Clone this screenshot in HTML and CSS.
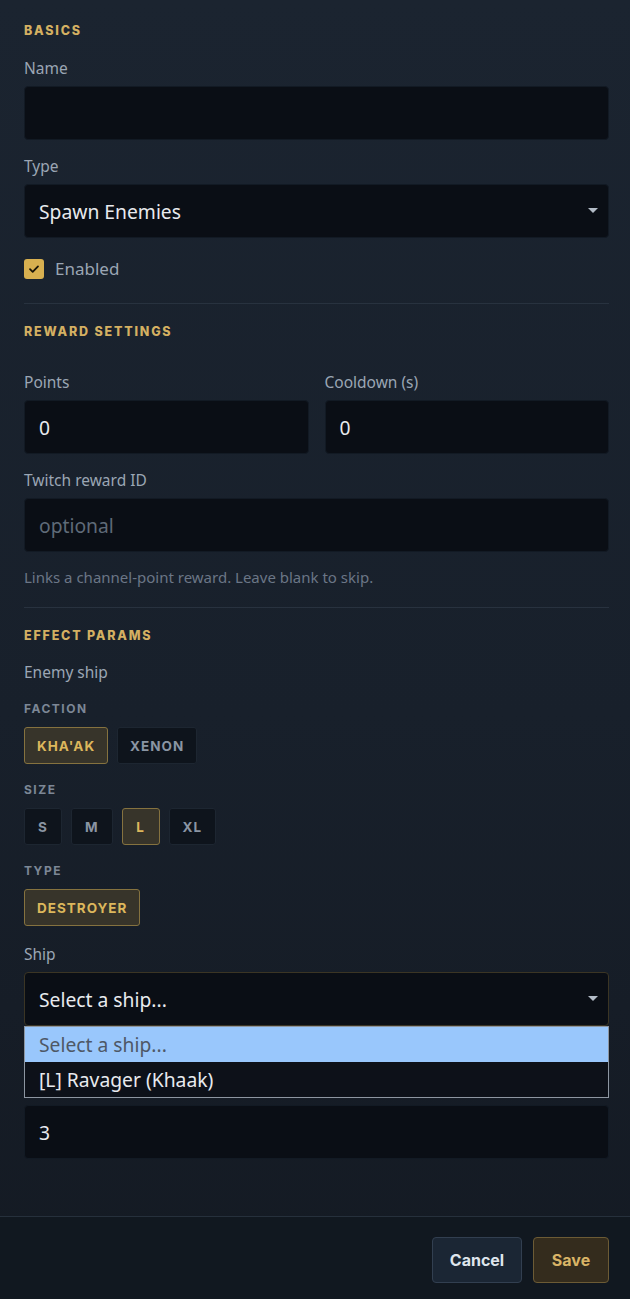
FILE: index.html
```html
<!DOCTYPE html>
<html>
<head>
<meta charset="utf-8">
<link rel="stylesheet" href="styles.css">
</head>
<body>
<div class="modal">
  <div class="content">
    <h3 class="section-title first">BASICS</h3>
    <div class="field">
      <label class="label">Name</label>
      <div class="input"></div>
    </div>
    <div class="field">
      <label class="label">Type</label>
      <div class="input select"><span class="value">Spawn Enemies</span><span class="caret"></span></div>
    </div>
    <div class="check-row">
      <span class="checkbox"><svg width="14" height="14" viewBox="0 0 14 14"><path d="M3 7.2l2.7 2.6L11 4.4" fill="none" stroke="#1a1408" stroke-width="1.8" stroke-linecap="round" stroke-linejoin="round"/></svg></span>
      <span class="check-label">Enabled</span>
    </div>
    <div class="divider"></div>

    <h3 class="section-title">REWARD SETTINGS</h3>
    <div class="row2">
      <div class="field">
        <label class="label">Points</label>
        <div class="input"><span class="value">0</span></div>
      </div>
      <div class="field">
        <label class="label">Cooldown (s)</label>
        <div class="input"><span class="value">0</span></div>
      </div>
    </div>
    <div class="field tight">
      <label class="label">Twitch reward ID</label>
      <div class="input"><span class="placeholder">optional</span></div>
    </div>
    <p class="hint">Links a channel-point reward. Leave blank to skip.</p>
    <div class="divider"></div>

    <h3 class="section-title">EFFECT PARAMS</h3>
    <div class="label sub">Enemy ship</div>
    <div class="mini-title">FACTION</div>
    <div class="chips">
      <span class="chip active">KHA'AK</span>
      <span class="chip">XENON</span>
    </div>
    <div class="mini-title">SIZE</div>
    <div class="chips">
      <span class="chip sq">S</span>
      <span class="chip sq">M</span>
      <span class="chip sq active">L</span>
      <span class="chip sq">XL</span>
    </div>
    <div class="mini-title">TYPE</div>
    <div class="chips">
      <span class="chip active">DESTROYER</span>
    </div>
    <div class="field ship">
      <label class="label">Ship</label>
      <div class="select-wrap">
        <div class="input select focused"><span class="value">Select a ship...</span><span class="caret"></span></div>
        <div class="dropdown">
          <div class="option selected">Select a ship...</div>
          <div class="option">[L] Ravager (Khaak)</div>
        </div>
      </div>
    </div>
    <div class="field count">
      <div class="input"><span class="value">3</span></div>
    </div>
  </div>
  <div class="footer">
    <button class="btn cancel">Cancel</button>
    <button class="btn save">Save</button>
  </div>
</div>
</body>
</html>
```

FILE: styles.css
```css
* { box-sizing: border-box; }
html, body { margin: 0; padding: 0; }
body {
  width: 630px;
  height: 1299px;
  overflow: hidden;
  background: #121820;
  font-family: "Noto Sans", "Open Sans", sans-serif;
}
.modal {
  height: 1299px;
  display: flex;
  flex-direction: column;
  background: linear-gradient(180deg, #1b2430 0%, #18202b 55%, #141a23 100%);
}
.content {
  flex: 1;
  padding: 23px 21px 0 24px;
}
.section-title {
  margin: 20px 0 0;
  font-family: "Inter", "Liberation Sans", sans-serif;
  font-weight: 800;
  font-size: 12.5px;
  line-height: 16px;
  letter-spacing: 1.8px;
  color: #d4b062;
}
.section-title.first { margin-top: 0; }
.label {
  display: block;
  font-size: 15.5px;
  line-height: 20px;
  color: #9ba6b4;
  margin-bottom: 8px;
}
.field { margin-top: 16px; }
.section-title + .field { margin-top: 19px; }
.input {
  height: 54px;
  background: #0a0e15;
  border: 1px solid #121a24;
  border-radius: 4px;
  display: flex;
  align-items: center;
  padding: 0 14px;
  font-size: 19.3px;
  color: #e8eaee;
  position: relative;
}
.placeholder { color: #5f6a78; }
.select .caret {
  position: absolute;
  right: 10px;
  top: 23px;
  width: 0; height: 0;
  border-left: 5px solid transparent;
  border-right: 5px solid transparent;
  border-top: 5px solid #b3bcc7;
}
.check-row {
  margin-top: 19px;
  height: 24px;
  display: flex;
  align-items: center;
  gap: 11px;
}
.checkbox {
  width: 20px; height: 20px;
  border-radius: 3px;
  background: #d8b050;
  display: flex; align-items: center; justify-content: center;
}
.check-label { font-size: 17px; line-height: 24px; color: #9ba6b4; }
.divider {
  height: 1px;
  background: #28323f;
  margin-top: 22px;
}
.row2 {
  display: grid;
  grid-template-columns: 1fr 1fr;
  gap: 16px;
  margin-top: 32px;
}
.row2 .field { margin-top: 0; }
.field.tight { margin-top: 16px; }
.hint {
  margin: 15px 0 0;
  font-size: 15px;
  line-height: 20px;
  color: #6b7686;
}
.hint + .divider { margin-top: 20px; }
.label.sub { margin-top: 18px; margin-bottom: 0; }
.mini-title {
  margin-top: 19px;
  font-family: "Inter", "Liberation Sans", sans-serif;
  font-weight: 700;
  font-size: 12px;
  line-height: 16px;
  letter-spacing: 1.5px;
  color: #7c8796;
}
.chips + .mini-title { margin-top: 18px; }
.chips {
  margin-top: 10px;
  display: flex;
  gap: 9px;
}
.chip {
  height: 37px;
  padding: 0 12px;
  display: flex; align-items: center; justify-content: center;
  border: 1px solid #1d2631;
  background: #0e141c;
  border-radius: 3px;
  font-family: "Inter", "Liberation Sans", sans-serif;
  font-weight: 700;
  font-size: 13.5px;
  letter-spacing: 1px;
  color: #8a95a3;
}
.chip.sq { min-width: 38px; padding: 0 13px; }
.chip.active {
  background: #37342a;
  border-color: #85723f;
  color: #dcb75c;
}
.field.ship { margin-top: 18px; }
.select-wrap { position: relative; }
.select.focused { border-color: #3b3524; }
.dropdown {
  position: absolute;
  left: 0; right: 0;
  top: 54px;
  border: 1px solid #8d96a1;
  background: #0d1119;
  z-index: 5;
}
.option {
  height: 35px;
  padding: 0 14px;
  display: flex;
  align-items: center;
  font-size: 19.3px;
  color: #e8eaee;
}
.option.selected { background: #99c7fc; color: #4e5866; }
.field.count { margin-top: 79px; }
.footer {
  height: 83px;
  border-top: 1px solid #26303c;
  background: #111820;
  display: flex;
  justify-content: flex-end;
  gap: 11px;
  padding: 20px 21px 16px 24px;
}
.btn {
  height: 46px;
  border-radius: 4px;
  font-family: "Inter", "Liberation Sans", sans-serif;
  font-weight: 700;
  font-size: 16px;
  padding: 0;
}
.btn.cancel {
  width: 90px;
  background: #1b2634;
  border: 1px solid #323f50;
  color: #dfe5ec;
}
.btn.save {
  width: 76px;
  background: #342c1d;
  border: 1px solid #6c5b35;
  color: #d9b466;
}
```
